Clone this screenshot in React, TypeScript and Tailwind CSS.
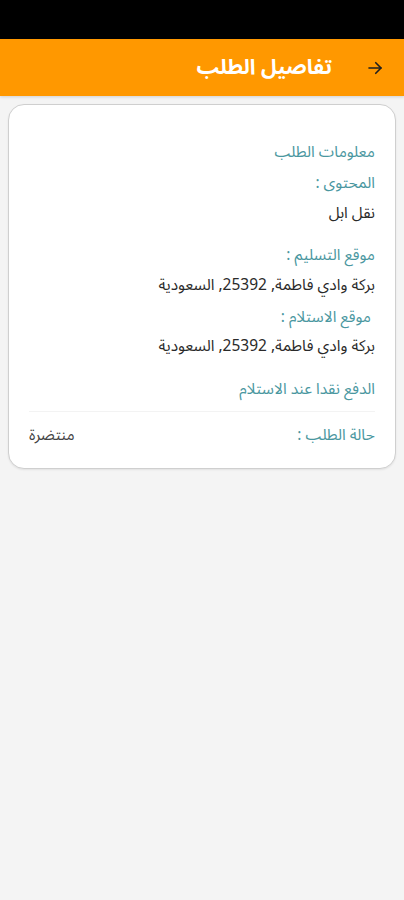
import React from 'react';

const App: React.FC = () => {
  return (
    <div dir="rtl" className="min-h-[900px] w-[404px] bg-[#f4f4f4] font-['Noto_Sans_Arabic','Noto_Sans','DejaVu_Sans',sans-serif]">
      {/* Status bar */}
      <div className="h-[39px] bg-black" />

      {/* Header */}
      <div className="flex h-[57px] items-center bg-[#ff9800] pr-[20px] shadow-[0_1px_3px_rgba(0,0,0,0.15)]">
        <svg width="18" height="18" viewBox="0 0 24 24" fill="none" stroke="#1f1f1f" strokeWidth="2.2" strokeLinecap="round" strokeLinejoin="round">
          <path d="M4 12h16" />
          <path d="M13 5l7 7-7 7" />
        </svg>
        <h1 className="mr-[34px] text-[21px] font-bold text-white">تفاصيل الطلب</h1>
      </div>

      {/* Card */}
      <div className="mx-[8px] mt-[8px] rounded-[16px] border border-[#cfcfcf] bg-white px-[20px] pb-[20px] pt-[34px] shadow-[0_1px_2px_rgba(0,0,0,0.08)]">
        <p className="text-[15.5px] leading-[26px] text-[#4a97a0]">معلومات الطلب</p>
        <p className="mt-[5px] text-[15.5px] leading-[26px] text-[#4a97a0]">المحتوى :</p>
        <p className="mt-[4px] text-[15.5px] leading-[26px] text-[#2a2a2a]">نقل ابل</p>

        <p className="mt-[16px] text-[15.5px] leading-[26px] text-[#4a97a0]">موقع التسليم :</p>
        <p className="mt-[4px] text-[15.5px] leading-[26px] text-[#2a2a2a]">بركة وادي فاطمة, 25392, السعودية</p>
        <p className="mt-[6px] pr-[4px] text-[15.5px] leading-[26px] text-[#4a97a0]">موقع الاستلام :</p>
        <p className="mt-[3px] text-[15.5px] leading-[26px] text-[#2a2a2a]">بركة وادي فاطمة, 25392, السعودية</p>

        <p className="mt-[17px] text-[15.5px] leading-[26px] text-[#4a97a0]">الدفع نقدا عند الاستلام</p>

        <div className="mt-[9px] border-t border-[#f3f3f3]" />

        <div className="mt-[10px] flex items-center justify-between">
          <span className="text-[15.5px] leading-[26px] text-[#4a97a0]">حالة الطلب :</span>
          <span className="text-[15.5px] leading-[26px] text-[#444]">منتضرة</span>
        </div>
      </div>
    </div>
  );
};

export default App;
